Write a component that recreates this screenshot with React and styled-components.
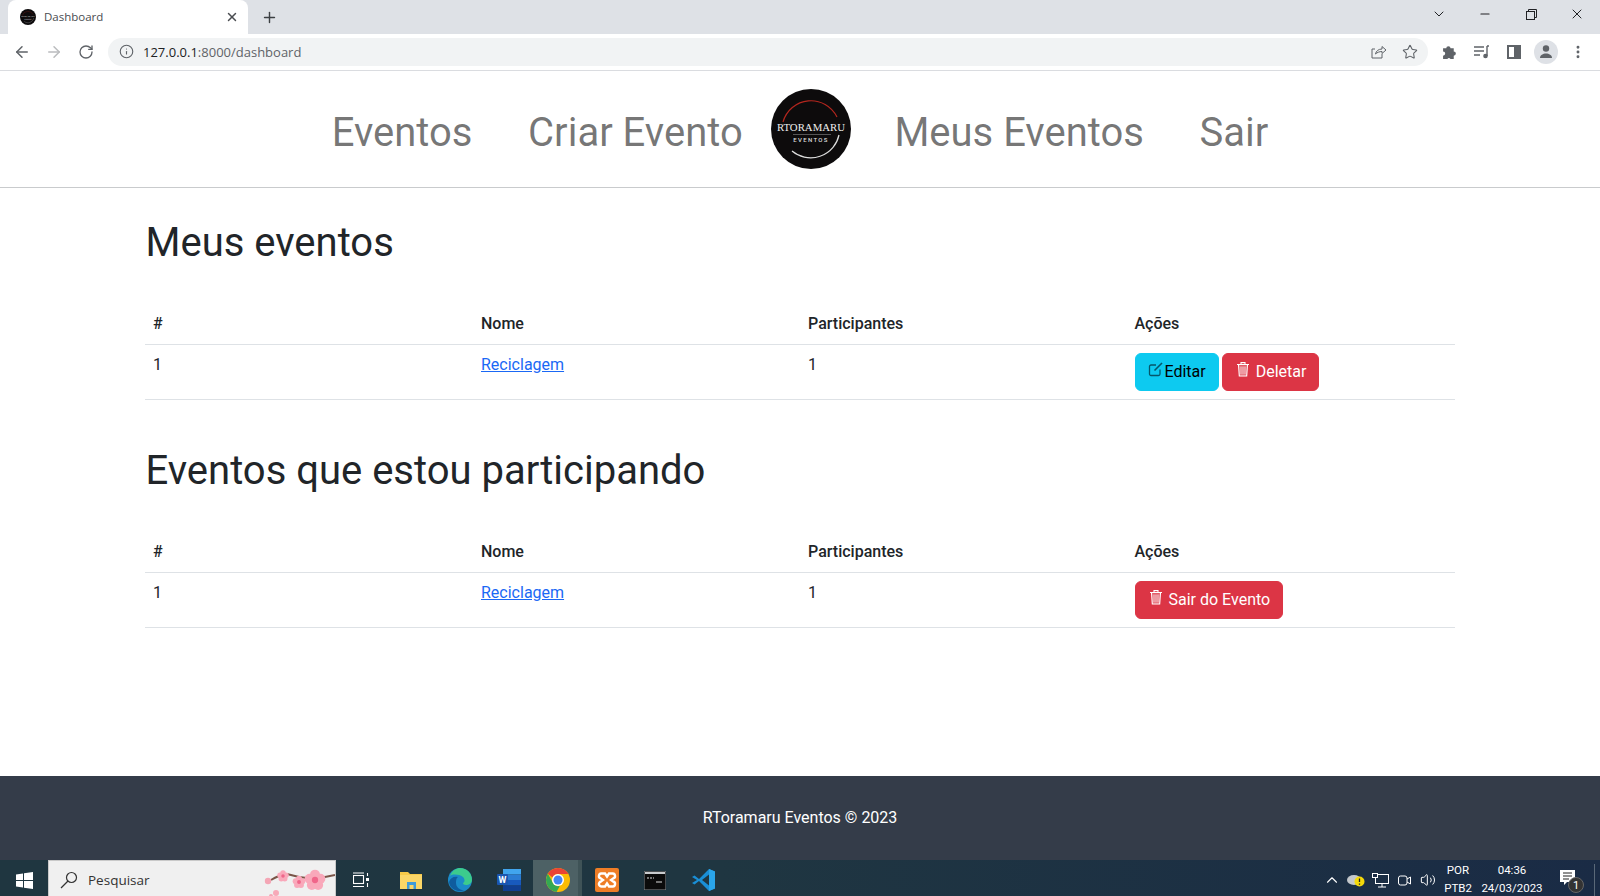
import styled, { createGlobalStyle } from "styled-components";
import { ArrowLeft, ArrowRight, RotateCw, Info, Star, EllipsisVertical, X, Plus, ChevronDown, ChevronUp, Minus, Volume2 } from "lucide-react";

const Global = createGlobalStyle`
  * { box-sizing: border-box; }
  html, body { margin: 0; padding: 0; height: 100%; }
  body { font-family: Roboto, "Liberation Sans", sans-serif; color: #212529; background: #fff; }
`;

const Page = styled.div`
  width: 1600px;
  height: 896px;
  display: flex;
  flex-direction: column;
  overflow: hidden;
`;

/* browser chrome */
const TabStrip = styled.div`
  height: 34px;
  flex: none;
  background: #dee1e6;
  display: flex;
  align-items: center;
  padding-left: 8px;
  color: #3c4043;
`;

const Tab = styled.div`
  width: 240px;
  height: 34px;
  background: #fff;
  border-radius: 8px 8px 0 0;
  display: flex;
  align-items: center;
  padding: 0 9px 0 12px;
  gap: 8px;
  font-family: "Open Sans", sans-serif;
  font-size: 11.5px;
  color: #4a4d51;
`;

const TabTitle = styled.span`
  flex: 1;
  margin-top: -1px;
`;

const NewTab = styled.div`
  display: flex;
  margin-left: 13px;
  color: #3c4043;
`;

const WindowControls = styled.div`
  margin-left: auto;
  display: flex;
  align-items: center;
  height: 28px;
  align-self: flex-start;
`;

const WindowButton = styled.div`
  width: 46px;
  height: 28px;
  display: flex;
  align-items: center;
  justify-content: center;
  color: #202124;
`;

const Toolbar = styled.div`
  height: 37px;
  flex: none;
  background: #fff;
  border-bottom: 1px solid #dadce0;
  display: flex;
  align-items: center;
  padding: 0 6px 1px 6px;
  color: #5f6368;
`;

const NavIcon = styled.div`
  width: 32px;
  height: 32px;
  display: flex;
  align-items: center;
  justify-content: center;
  flex: none;
  color: ${(p) => (p.$off ? "#babcbe" : "#5f6368")};
`;

const Omnibox = styled.div`
  width: 1320px;
  height: 28px;
  margin: 0 0 0 6px;
  border-radius: 14px;
  background: #f1f3f4;
  display: flex;
  align-items: center;
  padding: 0 8px 0 11px;
  gap: 9px;
  font-family: "Open Sans", sans-serif;
  font-size: 13px;
  color: #5f6368;
`;

const Url = styled.div`
  flex: 1;
  & b {
    font-weight: 400;
    color: #202124;
  }
`;

const OmniIcons = styled.div`
  display: flex;
  gap: 15px;
  align-items: center;
  padding-right: 2px;
`;

const ToolIcons = styled.div`
  display: flex;
  align-items: center;
  margin-left: 6px;
`;

const Avatar = styled.div`
  width: 24px;
  height: 24px;
  border-radius: 50%;
  background: #dee1e6;
  display: flex;
  align-items: center;
  justify-content: center;
`;

/* site nav */
const SiteNav = styled.nav`
  height: 117px;
  flex: none;
  border-bottom: 1px solid #c9cbcd;
  display: flex;
  align-items: center;
  justify-content: center;
`;

const NavLink = styled.a`
  font-size: 40px;
  line-height: 48px;
  color: rgba(0, 0, 0, 0.55);
  padding: 8px 27.8px 0;
  white-space: nowrap;
`;

const LogoWrap = styled.div`
  display: flex;
  margin: 0 16px 0 0;
`;

/* content */
const Main = styled.main`
  flex: 1;
  padding: 31px 145px 0;
`;

const Section = styled.section`
  margin-bottom: 47px;
`;

const Title = styled.h2`
  margin: 0 0 37px;
  padding-left: 0.5px;
  font-size: 40px;
  line-height: 48px;
  font-weight: 400;
`;

const Table = styled.table`
  width: 100%;
  border-collapse: collapse;
  table-layout: fixed;
  font-size: 16px;
  line-height: 24px;
`;

const Col = styled.col`
  width: ${(p) => p.$w}px;
`;

const Th = styled.th`
  text-align: left;
  font-weight: 500;
  padding: 8px;
  border-bottom: 1px solid #dee2e6;
`;

const Td = styled.td`
  padding: 8px;
  vertical-align: top;
  border-bottom: 1px solid #dee2e6;
`;

const EventLink = styled.a`
  color: #1a68f5;
  text-decoration: underline;
`;

const Actions = styled.div`
  display: flex;
  gap: 3px;
`;

const Button = styled.button`
  height: 38px;
  padding: 0 12px 0 ${(p) => (p.$kind === "info" ? "12px" : "13px")};
  border: 1px solid ${(p) => (p.$kind === "info" ? "#0dcaf0" : "#dc3545")};
  border-radius: 6px;
  background: ${(p) => (p.$kind === "info" ? "#0dcaf0" : "#dc3545")};
  color: ${(p) => (p.$kind === "info" ? "#000" : "#fff")};
  font: 400 16px/24px Roboto, sans-serif;
  display: flex;
  align-items: center;
  gap: ${(p) => (p.$kind === "info" ? "1px" : "6px")};
  & svg {
    position: relative;
    top: -3px;
  }
`;

const Footer = styled.footer`
  height: 84px;
  flex: none;
  background: #343c49;
  color: #fff;
  display: flex;
  align-items: center;
  justify-content: center;
  font-size: 16px;
  padding-bottom: 2px;
`;

/* windows taskbar */
const Taskbar = styled.div`
  height: 36px;
  flex: none;
  background: linear-gradient(90deg, #1f3640 0%, #1f3641 45%, #1a2b45 100%);
  display: flex;
  align-items: center;
  color: #fff;
`;

const StartButton = styled.div`
  width: 48px;
  height: 36px;
  padding-top: 4px;
  display: flex;
  align-items: center;
  justify-content: center;
`;

const SearchBox = styled.div`
  width: 288px;
  height: 36px;
  background: #f0f0f0;
  border: 1px solid #c9c9c9;
  border-width: 1px 1px 0;
  display: flex;
  align-items: center;
  padding: 3px 0 0 11px;
  gap: 10px;
  color: #333;
  font-family: "Open Sans", sans-serif;
  font-size: 13.5px;
  overflow: hidden;
`;

const SearchLabel = styled.span`
  flex: 1;
`;

const BlossomBox = styled.div`
  display: flex;
  align-self: flex-end;
`;

const TaskItem = styled.div`
  width: ${(p) => p.$w || 48.8}px;
  height: 36px;
  padding: 4px ${(p) => (p.$w ? "2px" : "0")} 0 0;
  display: flex;
  align-items: center;
  justify-content: center;
  background: ${(p) => (p.$active ? "#4d6165" : "transparent")};
  box-shadow: ${(p) => (p.$active ? "inset -4px 0 0 #3f5357" : "none")};
  flex: none;
`;

const Tray = styled.div`
  margin-left: auto;
  display: flex;
  align-items: center;
  height: 36px;
  padding-top: 4px;
  font-family: Roboto, sans-serif;
  font-size: 11.5px;
`;

const TrayIcon = styled.div`
  width: 24px;
  display: flex;
  justify-content: center;
`;

const TrayText = styled.div`
  text-align: center;
  line-height: 18px;
  width: ${(p) => p.$w}px;
  white-space: nowrap;
  margin-top: -2px;
`;

const Notify = styled.div`
  width: 47px;
  display: flex;
  padding-left: 11px;
  border-right: 1px solid #5a6878;
  height: 32px;
  align-items: center;
  margin-right: 5px;
`;

const Logo = ({ size }) => (
  <svg width={size} height={size} viewBox="0 0 80 80">
    <circle cx="40" cy="40" r="40" fill="#0d0b0c" />
    <path d="M12 33 A29 29 0 0 1 66 28" fill="none" stroke="#b3261e" strokeWidth="1.200" />
    <path d="M68 46 A29 29 0 0 1 21 62" fill="none" stroke="#ddd" strokeWidth="1.200" />
    <text x="40" y="42" textAnchor="middle" fill="#eee" fontFamily="Liberation Serif, serif" fontSize="10.800">RTORAMARU</text>
    <path d="M22 45.500 H60" stroke="#888" strokeWidth="0.600" />
    <text x="40" y="53" textAnchor="middle" fill="#ddd" fontFamily="Roboto, sans-serif" fontWeight="500" fontSize="6" letterSpacing="1.300">EVENTOS</text>
  </svg>
);

const EditIcon = () => (
  <svg width="16" height="16" viewBox="0 0 16 16" fill="none" stroke="#06566a" strokeWidth="1.300">
    <path d="M12 8.500V13a1.500 1.500 0 0 1-1.500 1.500H3A1.500 1.500 0 0 1 1.500 13V5.500A1.500 1.500 0 0 1 3 4h5" />
    <path d="M6.500 9.500 14 2" strokeWidth="1.600" />
  </svg>
);

const TrashIcon = () => (
  <svg width="14" height="16" viewBox="0 0 14 16" fill="none" stroke="#fff" strokeWidth="1.100">
    <path d="M1 3.500h12M5 3.500V1.500h4v2M2.500 3.500l.8 11.500h7.400l.8-11.500" fill="rgba(255,255,255,0.2)" />
    <path d="M5 5.500v8M7 5.500v8M9 5.500v8" strokeOpacity="0.7" />
  </svg>
);

const ShareIcon = () => (
  <svg width="16" height="15" viewBox="0 0 16 15" fill="none" stroke="#5f6368" strokeWidth="1">
    <path d="M11 10v4H1V5h3" />
    <path d="M4.500 10c.5-3 3-5 6.500-5V2.500L15 6l-4 3.500V7.500c-2.500 0-5 1-6.500 2.500z" />
  </svg>
);

const WindowsIcon = () => (
  <svg width="17" height="17" viewBox="0 0 17 17" fill="#fff">
    <path d="M0 2.400 7 1.400v6.600H0zM8 1.300 17 0v8H8zM0 9h7v6.600L0 14.600zM8 9h9v8l-9-1.300z" />
  </svg>
);

const MagnifierIcon = () => (
  <svg width="18" height="18" viewBox="0 0 18 18" fill="none" stroke="#333" strokeWidth="1.200">
    <circle cx="11.500" cy="6.500" r="5" />
    <path d="M8 10 1 17" />
  </svg>
);

const Flower = ({ x, y, r }) => (
  <g fill="#f9a8ba">
    <circle cx={x} cy={y - r * 0.6} r={r * 0.55} />
    <circle cx={x + r * 0.6} cy={y - r * 0.15} r={r * 0.55} />
    <circle cx={x + r * 0.35} cy={y + r * 0.55} r={r * 0.55} />
    <circle cx={x - r * 0.35} cy={y + r * 0.55} r={r * 0.55} />
    <circle cx={x - r * 0.6} cy={y - r * 0.15} r={r * 0.55} />
    <circle cx={x} cy={y} r={r * 0.35} fill="#f0668a" />
  </g>
);

const Blossom = () => (
  <svg width="72" height="35" viewBox="0 0 72 35">
    <path d="M8 19 Q16 14 24 13 L36 16 L52 18 L72 14" fill="none" stroke="#7a5548" strokeWidth="2" />
    <circle cx="5" cy="20" r="3.200" fill="#f4a6b5" />
    <Flower x={20} y={15} r={5} />
    <Flower x={36} y={21} r={5.500} />
    <Flower x={52} y={19} r={9} />
    <circle cx="13" cy="32" r="3" fill="#f7a9b8" />
    <circle cx="8" cy="35" r="2" fill="#f4a6b5" />
  </svg>
);

const TaskViewIcon = () => (
  <svg width="16" height="16" viewBox="0 0 16 16" fill="none" stroke="#fff" strokeWidth="1.100">
    <rect x="0.500" y="3.500" width="10" height="8" />
    <path d="M0 1h11M0 14.500h11M14.500 1v3M14.500 11v4" />
    <rect x="13" y="6" width="3" height="3" fill="#fff" stroke="none" />
  </svg>
);

const FolderIcon = () => (
  <svg width="22" height="20" viewBox="0 0 22 20">
    <path d="M0 2h8l2 2h12v15H0z" fill="#f7c948" />
    <rect x="0" y="5" width="22" height="14" fill="#fbd667" />
    <rect x="7" y="12" width="9" height="7" fill="#3f9bd9" />
    <rect x="9.500" y="15" width="4" height="4" fill="#fbd667" />
  </svg>
);

const EdgeIcon = () => (
  <svg width="24" height="24" viewBox="0 0 24 24">
    <circle cx="12" cy="12" r="12" fill="#1b8bc9" />
    <path d="M2 8C4 2 9 0 12 0c7 0 12 5 12 12 0 3-3 5-6 5-2 0-3-1-3-2 2-1 2-4 0-6-4-3-11-3-13-1z" fill="#3ccb8d" />
    <path d="M8 15c0 4 4 8 9 7-6 3-15 0-16-8 1-4 5-6 9-5-2 1-2 4-2 6z" fill="#0f5c9e" />
  </svg>
);

const WordIcon = () => (
  <svg width="24" height="22" viewBox="0 0 24 22">
    <rect x="6" y="0" width="18" height="5.500" fill="#41a5ee" />
    <rect x="6" y="5.500" width="18" height="5.500" fill="#2b7cd3" />
    <rect x="6" y="11" width="18" height="5.500" fill="#185abd" />
    <rect x="6" y="16.500" width="18" height="5.500" fill="#103f91" />
    <rect x="0" y="5" width="11" height="11" rx="1" fill="#1a56b0" />
    <text x="5.500" y="14" textAnchor="middle" fontSize="9" fontWeight="700" fontFamily="Roboto, sans-serif" fill="#fff">W</text>
  </svg>
);

const ChromeIcon = () => (
  <svg width="24" height="24" viewBox="0 0 24 24">
    <circle cx="12" cy="12" r="12" fill="#fbbc04" />
    <path d="M12 0a12 12 0 0 1 10.400 6H12a6 6 0 0 0-5.400 3.400L1.800 5.800A12 12 0 0 1 12 0z" fill="#ea4335" />
    <path d="M1.800 5.800 6.900 14.800a6 6 0 0 0 7 3L10.500 24A12 12 0 0 1 1.800 5.800z" fill="#34a853" />
    <circle cx="12" cy="12" r="6" fill="#fff" />
    <circle cx="12" cy="12" r="4.500" fill="#4285f4" />
  </svg>
);

const XamppIcon = () => (
  <svg width="24" height="24" viewBox="0 0 24 24">
    <rect width="24" height="24" rx="2" fill="#ee7d26" />
    <path d="M7 5.500h3l2 3 2-3h3a2.500 2.500 0 0 1 1 5l-2 1.500 2 1.500a2.500 2.500 0 0 1-1 5h-3l-2-3-2 3H7a2.500 2.500 0 0 1-1-5l2-1.500-2-1.500a2.500 2.500 0 0 1 1-5z" fill="none" stroke="#fff" strokeWidth="2.400" />
  </svg>
);

const CmdIcon = () => (
  <svg width="22" height="19" viewBox="0 0 22 19">
    <rect width="22" height="19" fill="#0b0b0b" stroke="#8a8f93" />
    <rect x="1" y="1" width="20" height="2" fill="#c9ccce" />
    <path d="M3 7h2M6 7h2M9 7h1M12 11h6" stroke="#ddd" strokeWidth="1.200" />
  </svg>
);

const VsCodeIcon = () => (
  <svg width="24" height="24" viewBox="0 0 24 24">
    <path d="M17 1 7 11 2.500 7.500 0 9l5 3-5 3 2.500 1.500L7 13l10 10 6-2.500V3.500z" fill="#1a8fd6" />
    <path d="M17 6.500 10 12l7 5.500z" fill="#1f3640" />
    <path d="M17 1l6 2.500v17L17 23z" fill="#2aa5ea" />
  </svg>
);

const EventTable = ({ children }) => (
  <Table>
    <colgroup>
      <Col $w={328} />
      <Col $w={327} />
      <Col $w={326.5} />
    </colgroup>
    <thead>
      <tr>
        <Th>#</Th>
        <Th>Nome</Th>
        <Th>Participantes</Th>
        <Th>Ações</Th>
      </tr>
    </thead>
    <tbody>
      <tr>
        <Td>1</Td>
        <Td>
          <EventLink href="#">Reciclagem</EventLink>
        </Td>
        <Td>1</Td>
        <Td>
          <Actions>{children}</Actions>
        </Td>
      </tr>
    </tbody>
  </Table>
);

const App = () => {
  return (
    <Page>
      <Global />
      <TabStrip>
        <Tab>
          <Logo size={16} />
          <TabTitle>Dashboard</TabTitle>
          <X size={14} strokeWidth={2.5} />
        </Tab>
        <NewTab>
          <Plus size={17} strokeWidth={2} />
        </NewTab>
        <WindowControls>
          <WindowButton>
            <ChevronDown size={16} strokeWidth={1.5} />
          </WindowButton>
          <WindowButton>
            <Minus size={14} strokeWidth={1.8} />
          </WindowButton>
          <WindowButton>
            <svg width="11" height="11" viewBox="0 0 11 11" fill="none" stroke="#202124">
              <rect x="0.500" y="2.500" width="8" height="8" />
              <path d="M2.500 2.500V.5h8v8H8.500" />
            </svg>
          </WindowButton>
          <WindowButton>
            <X size={16} strokeWidth={1.5} />
          </WindowButton>
        </WindowControls>
      </TabStrip>
      <Toolbar>
        <NavIcon>
          <ArrowLeft size={18} strokeWidth={2} />
        </NavIcon>
        <NavIcon $off>
          <ArrowRight size={18} strokeWidth={2} />
        </NavIcon>
        <NavIcon>
          <RotateCw size={16} strokeWidth={2} />
        </NavIcon>
        <Omnibox>
          <Info size={15} strokeWidth={1.8} />
          <Url>
            <b>127.0.0.1</b>:8000/dashboard
          </Url>
          <OmniIcons>
            <ShareIcon />
            <Star size={16} strokeWidth={1.6} />
          </OmniIcons>
        </Omnibox>
        <ToolIcons>
          <NavIcon>
            <svg width="16" height="16" viewBox="0 0 15 15" fill="#5f6368">
              <path d="M1 4h3a2 2 0 0 1 4 0h3v3a2 2 0 0 1 0 4v3H8a2 2 0 0 0-3 0H1v-3a2 2 0 0 0 0-4z" />
            </svg>
          </NavIcon>
          <NavIcon>
            <svg width="16" height="14" viewBox="0 0 16 14" fill="none" stroke="#5f6368" strokeWidth="1.400">
              <path d="M0 2h10M0 6h10M0 10h6M13 1v10" />
              <circle cx="11.500" cy="11" r="1.600" fill="#5f6368" />
              <path d="M13 1h2" />
            </svg>
          </NavIcon>
          <NavIcon>
            <svg width="14" height="14" viewBox="0 0 14 14" fill="none" stroke="#5f6368" strokeWidth="2">
              <rect x="1" y="1" width="12" height="12" />
              <rect x="8" y="1" width="5" height="12" fill="#5f6368" />
            </svg>
          </NavIcon>
          <NavIcon>
            <Avatar>
              <svg width="14" height="13" viewBox="0 0 14 13" fill="#5f6368">
                <circle cx="7" cy="3.500" r="3.200" />
                <path d="M1 13c0-3 3-4.500 6-4.500s6 1.500 6 4.500z" />
              </svg>
            </Avatar>
          </NavIcon>
          <NavIcon>
            <EllipsisVertical size={16} strokeWidth={2.4} />
          </NavIcon>
        </ToolIcons>
      </Toolbar>

      <SiteNav>
        <NavLink>Eventos</NavLink>
        <NavLink>Criar Evento</NavLink>
        <LogoWrap>
          <Logo size={80} />
        </LogoWrap>
        <NavLink>Meus Eventos</NavLink>
        <NavLink>Sair</NavLink>
      </SiteNav>

      <Main>
        <Section>
          <Title>Meus eventos</Title>
          <EventTable>
            <Button $kind="info">
              <EditIcon />
              Editar
            </Button>
            <Button $kind="danger">
              <TrashIcon />
              Deletar
            </Button>
          </EventTable>
        </Section>
        <Section>
          <Title>Eventos que estou participando</Title>
          <EventTable>
            <Button $kind="danger">
              <TrashIcon />
              Sair do Evento
            </Button>
          </EventTable>
        </Section>
      </Main>

      <Footer>RToramaru Eventos © 2023</Footer>

      <Taskbar>
        <StartButton>
          <WindowsIcon />
        </StartButton>
        <SearchBox>
          <MagnifierIcon />
          <SearchLabel>Pesquisar</SearchLabel>
          <BlossomBox>
            <Blossom />
          </BlossomBox>
        </SearchBox>
        <TaskItem $w={51}>
          <TaskViewIcon />
        </TaskItem>
        <TaskItem><FolderIcon /></TaskItem>
        <TaskItem><EdgeIcon /></TaskItem>
        <TaskItem><WordIcon /></TaskItem>
        <TaskItem $active><ChromeIcon /></TaskItem>
        <TaskItem><XamppIcon /></TaskItem>
        <TaskItem><CmdIcon /></TaskItem>
        <TaskItem><VsCodeIcon /></TaskItem>
        <Tray>
          <TrayIcon>
            <ChevronUp size={18} strokeWidth={1.5} />
          </TrayIcon>
          <TrayIcon>
            <svg width="18" height="14" viewBox="0 0 18 14">
              <ellipse cx="7" cy="7" rx="7" ry="5" fill="#c4c8cc" />
              <circle cx="12.500" cy="8.500" r="5" fill="#f5d90a" />
              <path d="M12.500 5.500v3.500M12.500 10.500v1.200" stroke="#222" strokeWidth="1.300" />
            </svg>
          </TrayIcon>
          <TrayIcon>
            <svg width="17" height="15" viewBox="0 0 17 15" fill="none" stroke="#fff">
              <rect x="3.500" y="1.500" width="13" height="9" />
              <rect x="0.500" y="0.500" width="5" height="4" fill="#1a2b45" />
              <path d="M6 14h8M10 11v3" />
            </svg>
          </TrayIcon>
          <TrayIcon>
            <svg width="13" height="15" viewBox="0 0 13 15" fill="none" stroke="#fff">
              <rect x="0.500" y="3" width="8.500" height="9" rx="2" />
              <path d="M9 6l3.500-2v7L9 9" />
            </svg>
          </TrayIcon>
          <TrayIcon>
            <Volume2 size={16} strokeWidth={1.5} />
          </TrayIcon>
          <TrayText $w={36}>POR<br />PTB2</TrayText>
          <TrayText $w={72}>04:36<br />24/03/2023</TrayText>
          <Notify>
            <svg width="26" height="26" viewBox="0 0 26 26">
              <path d="M1 3h15v12H8l-3 3v-3H1z" fill="#fff" />
              <path d="M4 6h9M4 9h9M4 12h6" stroke="#222" />
              <circle cx="17" cy="18" r="7.500" fill="#333" stroke="#666" />
              <text x="17" y="22" textAnchor="middle" fontSize="11" fontFamily="Roboto, sans-serif" fill="#fff">1</text>
            </svg>
          </Notify>
        </Tray>
      </Taskbar>
    </Page>
  );
};

export default App;
